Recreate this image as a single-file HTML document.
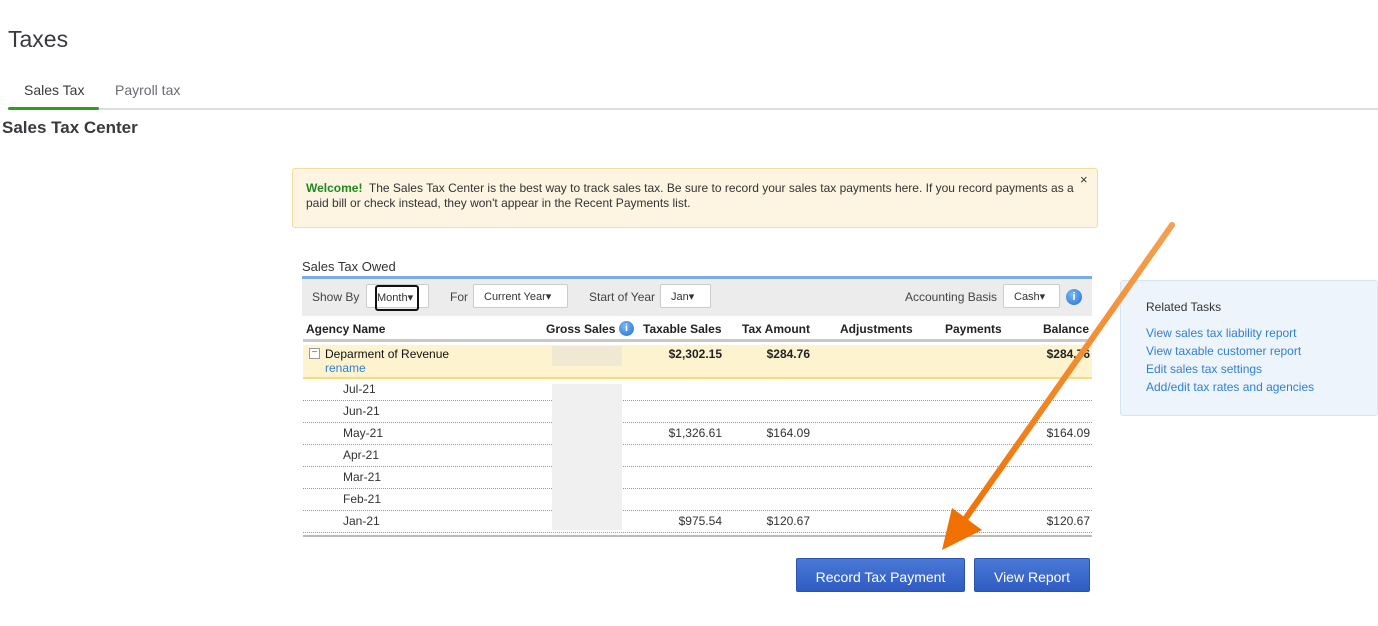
<!DOCTYPE html>
<html><head><style>
*{margin:0;padding:0;box-sizing:border-box}
body{width:1378px;height:626px;background:#fff;font-family:"Liberation Sans",sans-serif;position:relative;overflow:hidden;color:#333}
.a{position:absolute;white-space:nowrap}
.r{text-align:right}
.dd{position:absolute;border:1px solid #ccc;background:#fff;border-radius:2px;font-size:11px;color:#333;height:24px;line-height:24px;padding-left:10px}
.row{position:absolute;left:303px;width:789px;height:22px;border-bottom:1px dotted #999;font-size:12px;color:#333}
.row span{position:absolute;top:3px}
.link{color:#2f7fd8;font-size:12px}
.btn{position:absolute;top:558px;height:34px;background:linear-gradient(#4a79d6,#2f5bc2);border:1px solid #2a52ae;border-radius:2px;color:#fff;font-size:14px;text-align:center;line-height:36px}
</style></head><body>
<div class="a" style="left:8px;top:26px;font-size:23px;color:#393a3d">Taxes</div>
<div class="a" style="left:24px;top:82px;font-size:14px;color:#393a3d">Sales Tax</div>
<div class="a" style="left:115px;top:82px;font-size:14px;color:#6b6c72">Payroll tax</div>
<div class="a" style="left:8px;top:108px;width:1370px;height:2px;background:#dcdde0"></div>
<div class="a" style="left:8px;top:107px;width:91px;height:3px;background:#2ca01c;border-radius:2px"></div>
<div class="a" style="left:2px;top:118px;font-size:17px;font-weight:bold;color:#393a3d">Sales Tax Center</div>

<div class="a" style="left:292px;top:168px;width:806px;height:60px;background:#fdf5e2;border:1px solid #f2dc9e;border-radius:3px"></div>
<div class="a" style="left:306px;top:181px;font-size:12px;color:#333;line-height:15px;white-space:normal;width:780px"><b style="color:#1e8a1e">Welcome!</b>&nbsp; The Sales Tax Center is the best way to track sales tax. Be sure to record your sales tax payments here. If you record payments as a paid bill or check instead, they won't appear in the Recent Payments list.</div>
<div class="a" style="left:1080px;top:172px;font-size:13px;color:#333">×</div>

<div class="a" style="left:302px;top:259px;font-size:13px;color:#333">Sales Tax Owed</div>
<div class="a" style="left:302px;top:276px;width:790px;height:3px;background:#7aaee3"></div>
<div class="a" style="left:302px;top:279px;width:790px;height:37px;background:#ececec"></div>
<div class="a" style="left:312px;top:290px;font-size:12px;color:#444">Show By</div>
<div class="dd" style="left:366px;top:284px;width:63px;padding-left:0"></div>
<div class="a" style="left:375px;top:285px;width:44px;height:26px;border:2px solid #111;border-radius:3px;font-size:11px;line-height:22px;padding-left:0">Month▾</div>
<div class="a" style="left:450px;top:290px;font-size:12px;color:#444">For</div>
<div class="dd" style="left:473px;top:284px;width:95px">Current Year▾</div>
<div class="a" style="left:589px;top:290px;font-size:12px;color:#444">Start of Year</div>
<div class="dd" style="left:660px;top:284px;width:51px">Jan▾</div>
<div class="a" style="left:905px;top:290px;font-size:12px;color:#444">Accounting Basis</div>
<div class="dd" style="left:1003px;top:284px;width:57px">Cash▾</div>
<div class="a" style="left:1066px;top:289px;width:16px;height:16px;border-radius:50%;background:radial-gradient(circle at 40% 35%,#7ab8f5,#1f6fd0);color:#fff;font-size:11px;font-weight:bold;text-align:center;line-height:16px">i</div>

<div style="position:absolute;left:303px;top:318px;width:789px;height:24px;font-size:12px;font-weight:bold;color:#222;border-bottom:3px solid #c8c8c8">
<span class="a" style="left:3px;top:4px">Agency Name</span>
<span class="a" style="left:243px;top:4px">Gross Sales</span>
<span class="a" style="left:316px;top:3px;width:15px;height:15px;border-radius:50%;background:radial-gradient(circle at 40% 35%,#7ab8f5,#1f6fd0);color:#fff;font-size:10px;text-align:center;line-height:15px">i</span>
<span class="a" style="left:340px;top:4px">Taxable Sales</span>
<span class="a" style="left:439px;top:4px">Tax Amount</span>
<span class="a" style="left:537px;top:4px">Adjustments</span>
<span class="a" style="left:642px;top:4px">Payments</span>
<span class="a" style="left:740px;top:4px">Balance</span>
</div>
<div class="a" style="left:303px;top:345px;width:789px;height:34px;background:#fdf4cf;border-bottom:2px solid #f5dc7c"></div>
<div class="a" style="left:309px;top:348px;width:11px;height:11px;border:1px solid #999;background:#fff;font-size:10px;line-height:8px;text-align:center;color:#666">−</div>
<div class="a" style="left:325px;top:347px;font-size:12px;color:#111">Deparment of Revenue</div>
<div class="a link" style="left:325px;top:361px">rename</div>
<div class="a r" style="left:622px;width:100px;top:347px;font-size:12px;font-weight:bold;color:#222">$2,302.15</div>
<div class="a r" style="left:710px;width:100px;top:347px;font-size:12px;font-weight:bold;color:#222">$284.76</div>
<div class="a r" style="left:990px;width:100px;top:347px;font-size:12px;font-weight:bold;color:#222">$284.76</div>

<div class="row" style="top:379px"><span style="left:40px">Jul-21</span></div>
<div class="row" style="top:401px"><span style="left:40px">Jun-21</span></div>
<div class="row" style="top:423px"><span style="left:40px">May-21</span><span style="left:319px;width:100px;text-align:right">$1,326.61</span><span style="left:407px;width:100px;text-align:right">$164.09</span><span style="left:687px;width:100px;text-align:right">$164.09</span></div>
<div class="row" style="top:445px"><span style="left:40px">Apr-21</span></div>
<div class="row" style="top:467px"><span style="left:40px">Mar-21</span></div>
<div class="row" style="top:489px"><span style="left:40px">Feb-21</span></div>
<div class="row" style="top:511px"><span style="left:40px">Jan-21</span><span style="left:319px;width:100px;text-align:right">$975.54</span><span style="left:407px;width:100px;text-align:right">$120.67</span><span style="left:687px;width:100px;text-align:right">$120.67</span></div>
<div class="a" style="left:303px;top:535px;width:789px;height:2px;background:#bbb"></div>
<div class="a" style="left:552px;top:346px;width:70px;height:20px;background:#efe8d2"></div>
<div class="a" style="left:552px;top:384px;width:70px;height:146px;background:#f0f0f0"></div>

<div class="a" style="left:1120px;top:280px;width:258px;height:136px;background:#eef4fb;border:1px solid #d6e4f3;border-radius:3px"></div>
<div class="a" style="left:1146px;top:300px;font-size:12px;color:#333">Related Tasks</div>
<div class="a link" style="left:1146px;top:326px">View sales tax liability report</div>
<div class="a link" style="left:1146px;top:344px">View taxable customer report</div>
<div class="a link" style="left:1146px;top:362px">Edit sales tax settings</div>
<div class="a link" style="left:1146px;top:380px">Add/edit tax rates and agencies</div>

<div class="btn" style="left:796px;width:169px">Record Tax Payment</div>
<div class="btn" style="left:974px;width:116px">View Report</div>

<svg class="a" style="left:0;top:0" width="1378" height="626">
<defs><linearGradient id="g" x1="1172" y1="225" x2="950" y2="540" gradientUnits="userSpaceOnUse"><stop offset="0" stop-color="#f5a050"/><stop offset="1" stop-color="#f07000"/></linearGradient></defs>
<line x1="1172" y1="225" x2="963" y2="522" stroke="url(#g)" stroke-width="6" stroke-linecap="round"/>
<polygon points="942,550 952,508 982,530" fill="#f07000"/>
</svg>
</body></html>
